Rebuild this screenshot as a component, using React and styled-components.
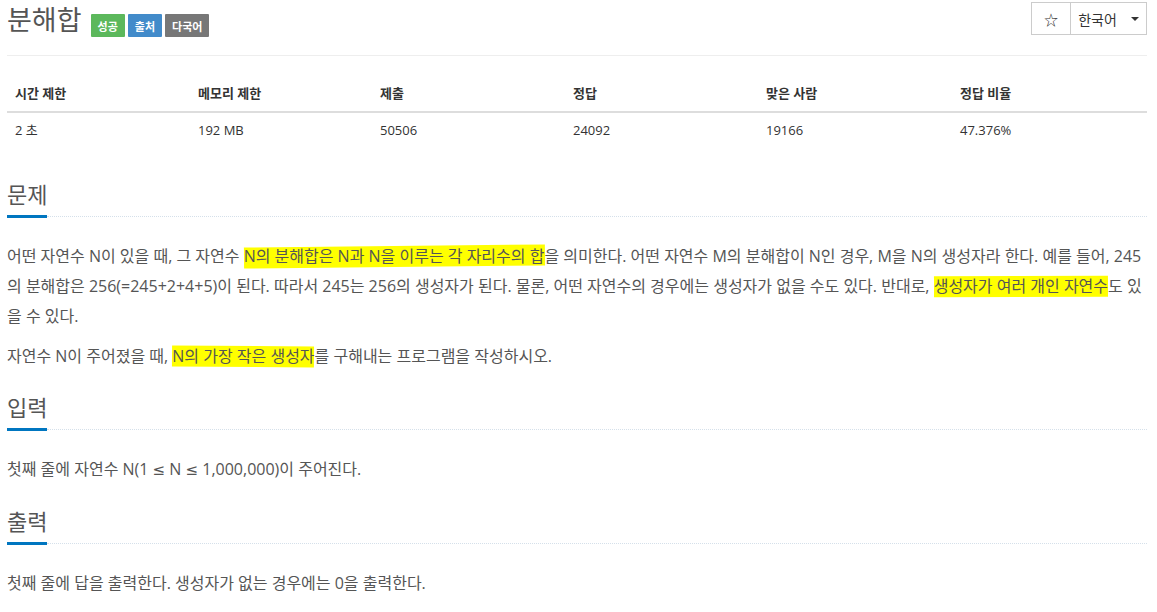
import React from 'react';
import styled, { createGlobalStyle } from 'styled-components';

const GlobalStyle = createGlobalStyle`
  html, body {
    margin: 0;
    padding: 0;
    background: #fff;
  }
  body {
    font-family: "Open Sans", "Noto Sans CJK KR", sans-serif;
    color: #333;
  }
`;

const Page = styled.div`
  width: 1140px;
  padding: 0 10px 0 7px;
`;

const Header = styled.div`
  display: flex;
  justify-content: space-between;
  align-items: flex-start;
  height: 56px;
  border-bottom: 1px solid #eee;
  box-sizing: border-box;
  padding-top: 2px;
`;

const TitleRow = styled.div`
  display: flex;
  align-items: flex-start;
`;

const Title = styled.h1`
  margin: 0;
  font-size: 27px;
  line-height: 36px;
  font-weight: 400;
  color: #555;
`;

const Badges = styled.div`
  display: flex;
  gap: 3px;
  margin: 12px 0 0 9px;
`;

const Badge = styled.span`
  display: inline-flex;
  align-items: center;
  justify-content: center;
  height: 23px;
  padding: 0 7px;
  background: ${p => p.$color};
  color: #fff;
  font-size: 11px;
  font-weight: 700;
  border-radius: 1px;
`;

const BtnGroup = styled.div`
  display: flex;
  height: 33px;
  border: 1px solid #ccc;
  box-sizing: border-box;
`;

const Btn = styled.button`
  display: flex;
  align-items: center;
  justify-content: center;
  gap: 14px;
  height: 100%;
  width: ${p => p.$w}px;
  padding: 0;
  border: none;
  border-left: ${p => (p.$first ? 'none' : '1px solid #ccc')};
  background: #fff;
  color: #333;
  font-family: "Open Sans", "Noto Sans CJK KR", sans-serif;
  font-size: 14px;
  cursor: pointer;
`;

const Caret = styled.span`
  width: 0;
  height: 0;
  border-left: 4px solid transparent;
  border-right: 4px solid transparent;
  border-top: 4px solid #333;
  margin-top: 1px;
`;

const Table = styled.table`
  width: 1140px;
  margin: 20px 0 34px;
  border-collapse: collapse;
  table-layout: fixed;
  font-size: 13px;

  th, td {
    text-align: left;
    padding: 8px;
    line-height: 19px;
    color: #333;
  }
  th {
    font-weight: 700;
    border-bottom: 2px solid #ddd;
  }
`;

const Section = styled.section`
  margin-top: 24px;
`;

const Headline = styled.div`
  display: flex;
  align-items: flex-end;

  &::after {
    content: '';
    flex: 1;
    border-bottom: 1px dotted #d5e0ea;
    margin-bottom: 1px;
  }
`;

const HeadTitle = styled.h2`
  margin: 0;
  font-size: 22px;
  line-height: 24px;
  font-weight: 400;
  color: #555;
  padding-bottom: 9px;
  border-bottom: 3px solid #0076c0;
`;

const Body = styled.div`
  margin-top: 23px;
  font-size: 16px;
  line-height: 30px;
  color: #555;

  p {
    margin: 0 0 10px;
  }
`;

const Mark = styled.span`
  position: relative;
  z-index: 0;

  &::before {
    content: '';
    position: absolute;
    left: 0;
    right: 0;
    top: 1px;
    bottom: 0;
    background: #ffff00;
    z-index: -1;
    transform: rotate(${p => p.$tilt || 0}deg);
  }
`;

const Sym = styled.span`
  font-family: "DejaVu Sans", sans-serif;
  font-size: 15px;
`;

const cols = [183, 182, 193, 193, 194, 195];
const heads = ['시간 제한', '메모리 제한', '제출', '정답', '맞은 사람', '정답 비율'];
const values = ['2 초', '192 MB', '50506', '24092', '19166', '47.376%'];

export default function App() {
  return (
    <Page>
      <GlobalStyle />
      <Header>
        <TitleRow>
          <Title>분해합</Title>
          <Badges>
            <Badge $color="#5cb85c">성공</Badge>
            <Badge $color="#428bca">출처</Badge>
            <Badge $color="#777">다국어</Badge>
          </Badges>
        </TitleRow>
        <BtnGroup>
          <Btn $first $w={38}>☆</Btn>
          <Btn $w={76}>
            한국어 <Caret />
          </Btn>
        </BtnGroup>
      </Header>

      <Table>
        <colgroup>
          {cols.map((w, i) => (
            <col key={i} style={{ width: w }} />
          ))}
        </colgroup>
        <thead>
          <tr>
            {heads.map(h => (
              <th key={h}>{h}</th>
            ))}
          </tr>
        </thead>
        <tbody>
          <tr>
            {values.map(v => (
              <td key={v}>{v}</td>
            ))}
          </tr>
        </tbody>
      </Table>

      <Section>
        <Headline>
          <HeadTitle>문제</HeadTitle>
        </Headline>
        <Body>
          <p>
            어떤 자연수 N이 있을 때, 그 자연수 <Mark $tilt={-0.6}>N의 분해합은 N과 N을 이루는 각 자리수의 합</Mark>을 의미한다. 어떤 자연수 M의 분해합이 N인 경우, M을 N의 생성자라 한다. 예를 들어, 245의 분해합은 256(=245+2+4+5)이 된다. 따라서 245는 256의 생성자가 된다. 물론, 어떤 자연수의 경우에는 생성자가 없을 수도 있다. 반대로, <Mark $tilt={-0.2}>생성자가 여러 개인 자연수</Mark>도 있을 수 있다.
          </p>
          <p>
            자연수 N이 주어졌을 때, <Mark $tilt={0.5}>N의 가장 작은 생성자</Mark>를 구해내는 프로그램을 작성하시오.
          </p>
        </Body>
      </Section>

      <Section>
        <Headline>
          <HeadTitle>입력</HeadTitle>
        </Headline>
        <Body>
          <p>
            첫째 줄에 자연수 N(1 <Sym>≤</Sym> N <Sym>≤</Sym> 1,000,000)이 주어진다.
          </p>
        </Body>
      </Section>

      <Section>
        <Headline>
          <HeadTitle>출력</HeadTitle>
        </Headline>
        <Body>
          <p>첫째 줄에 답을 출력한다. 생성자가 없는 경우에는 0을 출력한다.</p>
        </Body>
      </Section>
    </Page>
  );
}
